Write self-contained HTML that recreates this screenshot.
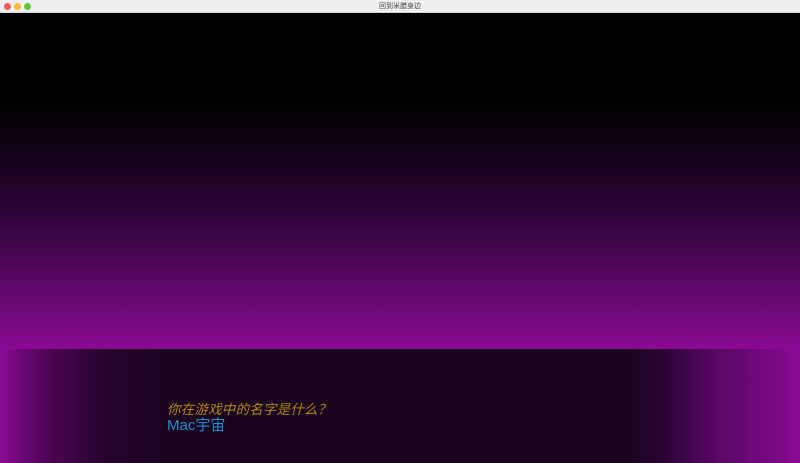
<!DOCTYPE html>
<html><head><meta charset="utf-8"><style>
*{margin:0;padding:0;box-sizing:border-box}
body{width:800px;height:463px;overflow:hidden;background:#000;position:relative;font-family:"Liberation Sans","Noto Sans CJK SC",sans-serif}
.tb{position:absolute;left:0;top:0;width:800px;height:13px;background:#efeff1;border-bottom:1px solid #d6d6d6}
.d{position:absolute;top:3px;width:7px;height:7px;border-radius:50%}
.t{position:absolute;left:0;width:800px;top:1px;text-align:center;font-size:7px;color:#444;line-height:11px}
.sky{position:absolute;left:0;top:14px;width:800px;height:335px;background:linear-gradient(#000 0%,#000 26%,#0e0212 38%,#260430 55%,#4c0756 74%,#8a0a94 100%)}
.panel{position:absolute;left:0;top:349px;width:800px;height:114px;background:linear-gradient(90deg,#8a0a94 0px,#4a0652 50px,#25042c 110px,#1b0420 165px,#1b0420 630px,#2a0432 660px,#5a0866 720px,#8a0a94 800px)}
.q{position:absolute;left:167px;top:398px;font-size:13.5px;font-style:italic;color:#b08a10;letter-spacing:0.2px}
.n{position:absolute;left:167px;top:414px;font-size:15px;color:#1a90d0}
</style></head><body>
<div class="tb"><div class="d" style="left:4px;background:#ee5e57"></div><div class="d" style="left:14px;background:#f5bd2f"></div><div class="d" style="left:24px;background:#5fc83e"></div><div class="t">回到米腊身边</div></div>
<div class="sky"></div>
<div class="panel"></div>
<div class="q">你在游戏中的名字是什么？</div>
<div class="n">Mac宇宙</div>
</body></html>
